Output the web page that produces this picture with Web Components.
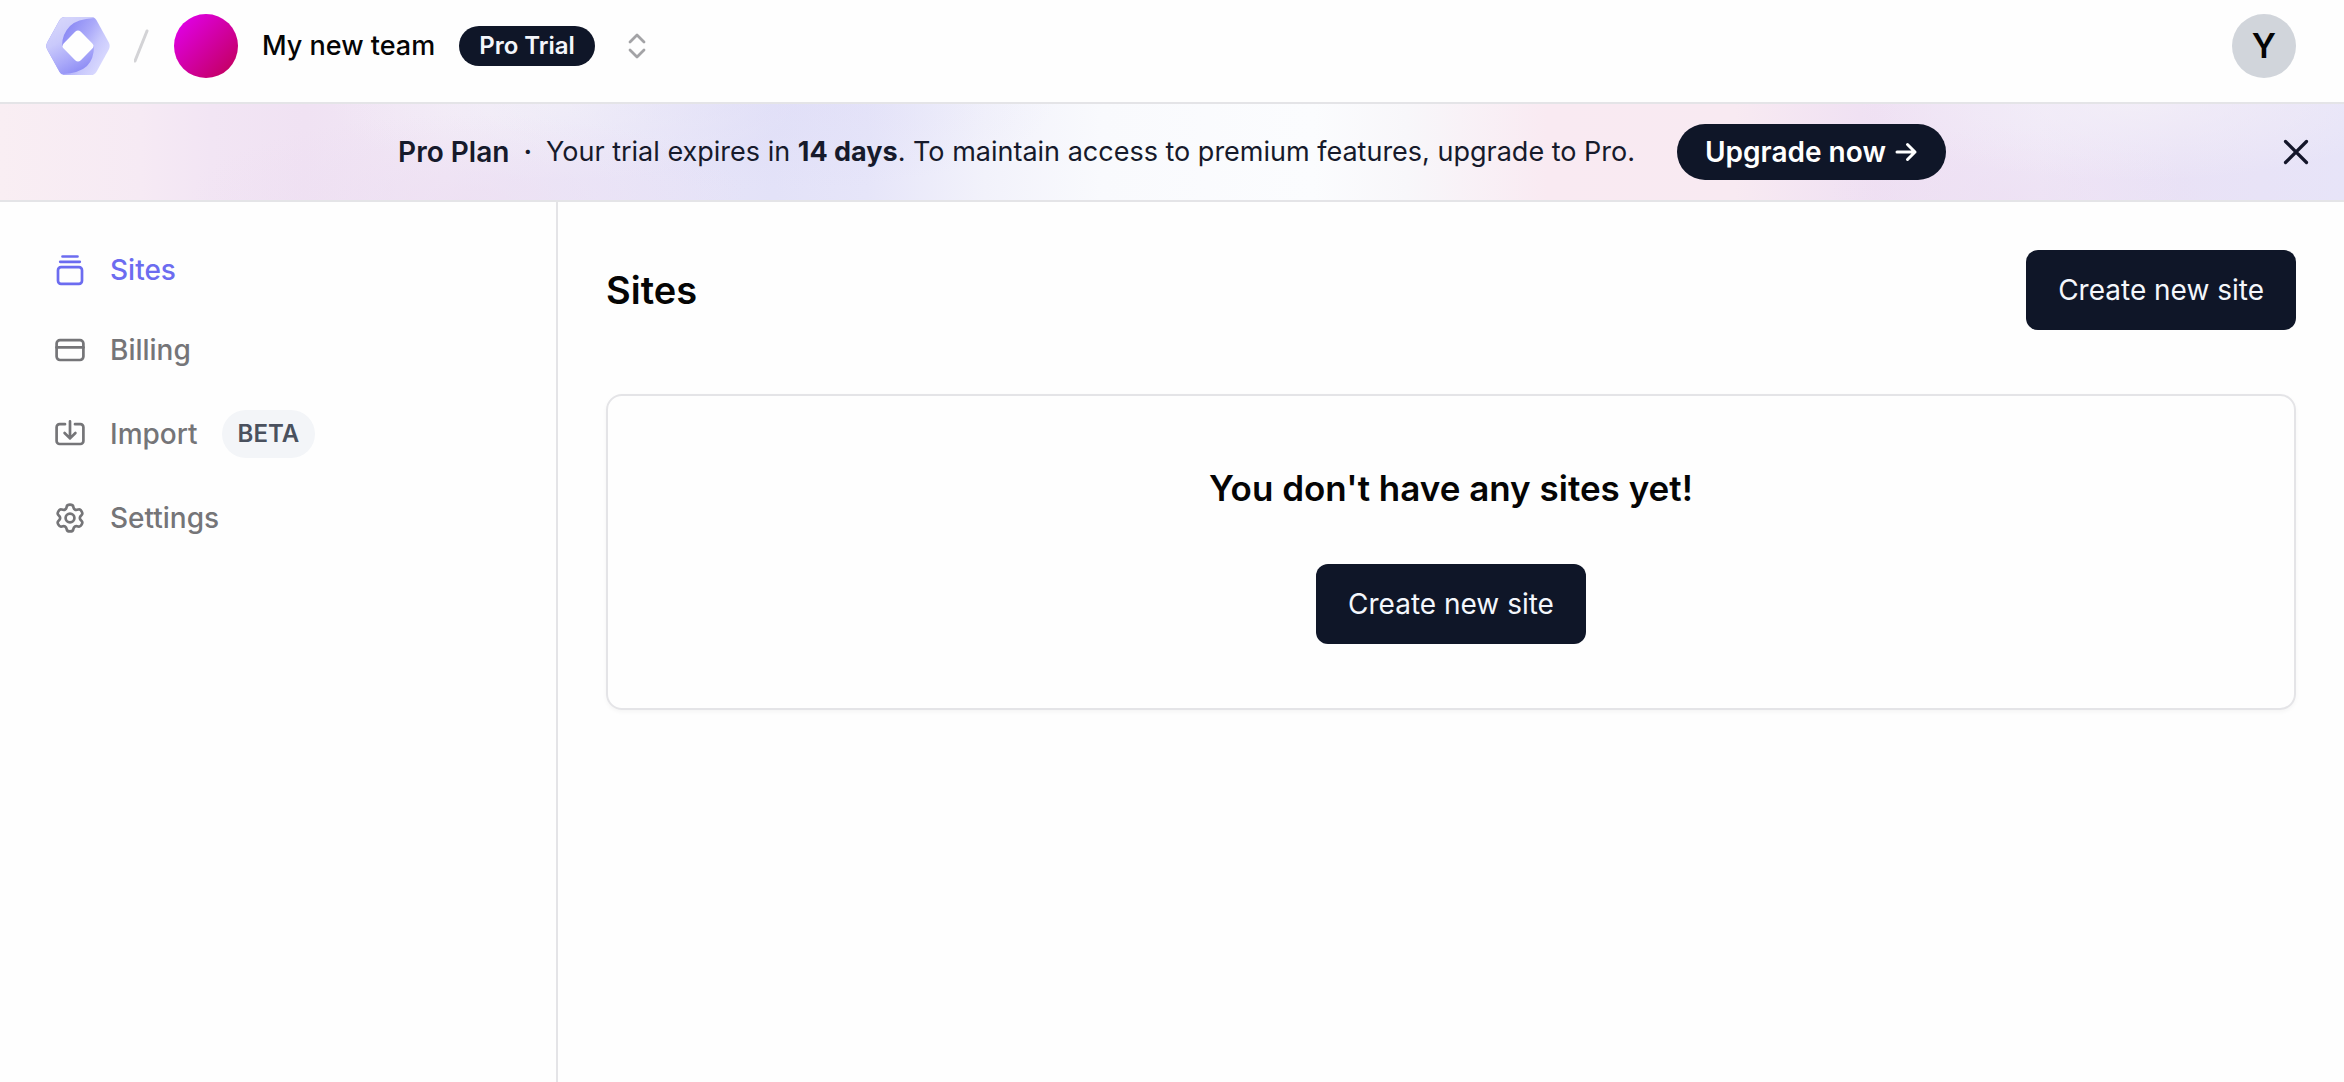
<!DOCTYPE html>
<html lang="en">
<head>
<meta charset="utf-8">
<meta name="viewport" content="width=device-width, initial-scale=1">
<title>Sites</title>
<style>
  :root {
    --ink: #0f1628;
    --line: #e4e4e7;
    --muted: #757578;
    --accent: #6c6cf0;
  }
  html, body { height: 100%; }
  body {
    margin: 0;
    background: #fefefe;
    color: #050505;
    font-family: Inter, "Liberation Sans", sans-serif;
    font-size: 28px;
    line-height: 40px;
  }
</style>
</head>
<body>
<app-shell>
  <app-header slot="header"></app-header>
  <trial-banner slot="banner">
    <strong slot="plan">Pro Plan</strong>
    <span slot="message">Your trial expires in <strong>14 days</strong>. To maintain access to premium features, upgrade to Pro.</span>
  </trial-banner>
  <side-nav slot="nav">
    <nav-item icon="sites" active>Sites</nav-item>
    <nav-item icon="billing">Billing</nav-item>
    <nav-item icon="import" badge="BETA">Import</nav-item>
    <nav-item icon="settings">Settings</nav-item>
  </side-nav>
  <sites-page>
    <empty-card heading="You don't have any sites yet!">
      <primary-button>Create new site</primary-button>
    </empty-card>
  </sites-page>
</app-shell>

<script>
const define = (name, markup) => customElements.define(name, class extends HTMLElement {
  constructor() {
    super();
    this.attachShadow({ mode: "open" }).innerHTML = markup;
  }
});

const reset = `
  * { box-sizing: border-box; }
  button { font: inherit; color: inherit; background: none; border: 0; margin: 0; padding: 0; cursor: pointer; }
  a { color: inherit; text-decoration: none; }
  svg { display: block; flex: none; }
`;

// Outline of a six-toothed gear, one set of curves per tooth.
const gearPath = () => {
  const at = (x, y, turn) => {
    const a = turn * Math.PI / 3, c = Math.cos(a), s = Math.sin(a);
    return `${(x * c - y * s).toFixed(2)} ${(x * s + y * c).toFixed(2)}`;
  };
  let d = `M${at(-4.9, -8.5, 0)}`;
  for (let i = 0; i < 6; i++) {
    d += `C${at(-3.6, -9.2, i)} ${at(-3.5, -10.2, i)} ${at(-3.2, -11.6, i)}`;
    d += `C${at(-2.7, -14, i)} ${at(2.7, -14, i)} ${at(3.2, -11.6, i)}`;
    d += `C${at(3.5, -10.2, i)} ${at(3.6, -9.2, i)} ${at(4.9, -8.5, i)}`;
  }
  return d + "Z";
};

const icons = {
  sites: `<path d="M-7.5-13.5h15M-9.8-8.2H9.8"/><rect x="-12" y="-2.8" width="24" height="16.6" rx="3"/>`,
  billing: `<rect x="-13.4" y="-9.8" width="26.8" height="19.8" rx="3.4"/><path d="M-13.4-2.6h26.8"/>`,
  import: `<path d="M-5-9.8h-5.4a3 3 0 0 0-3 3V7a3 3 0 0 0 3 3h20.8a3 3 0 0 0 3-3V-6.8a3 3 0 0 0-3-3H5M0-12.6V4.4M-5.4-1 0 4.4 5.4-1"/>`,
  settings: `<path d="${gearPath()}"/><circle r="4.4"/>`
};

define("app-shell", `
  <style>${reset}
    :host { display: flex; flex-direction: column; min-height: 100vh; }
    .body { display: flex; flex: 1; }
    main { flex: 1; min-width: 0; padding: 48px; }
  </style>
  <slot name="header"></slot>
  <slot name="banner"></slot>
  <div class="body">
    <slot name="nav"></slot>
    <main><slot></slot></main>
  </div>
`);

define("brand-logo", `
  <style>${reset} :host { display: block; }</style>
  <svg width="64" height="60" viewBox="0 0 64 60" role="img" aria-label="Home">
    <defs>
      <linearGradient id="outer" gradientUnits="userSpaceOnUse" x1="14" y1="2" x2="42" y2="54">
        <stop offset="0" stop-color="#d6d6fb"/><stop offset=".35" stop-color="#c9c9fb"/>
        <stop offset=".7" stop-color="#a9a8f9"/><stop offset="1" stop-color="#8a89f4"/>
      </linearGradient>
      <linearGradient id="inner" gradientUnits="userSpaceOnUse" x1="18" y1="20" x2="58" y2="44">
        <stop offset="0" stop-color="#8e8df5"/><stop offset=".4" stop-color="#aaa9f9"/>
        <stop offset=".7" stop-color="#c8c8fc"/><stop offset="1" stop-color="#d8d8fe"/>
      </linearGradient>
      <clipPath id="hex"><path d="M19 1h26q3.600 0 5.400 3.100L62.800 26.500q1.800 3.500 0 7L50.400 55.900Q48.600 59 45 59H19q-3.600 0-5.400-3.100L1.200 33.500q-1.800-3.500 0-7L13.600 4.100Q15.400 1 19 1Z"/></clipPath>
    </defs>
    <g clip-path="url(#hex)">
      <path fill="url(#inner)" d="M0 0h64v60H0z"/>
      <path fill="url(#outer)" d="M0 0h48v2Q31 3 24 10q-8 8-8 20h32q0 13-7 20-7 7-25 8v2H0z"/>
    </g>
    <rect x="-12" y="-12" width="24" height="24" rx="4" transform="translate(32 30) rotate(45)" fill="#fefefe"/>
  </svg>
`);

define("app-header", `
  <style>${reset}
    :host { display: block; border-bottom: 2px solid var(--line); }
    header { display: flex; align-items: center; justify-content: space-between; padding: 14px 48px 24px 46px; }
    .crumbs { display: flex; align-items: center; gap: 24px; }
    .team { display: flex; align-items: center; gap: 24px; font-size: 27px; font-weight: 500; }
    .avatar { width: 64px; height: 64px; border-radius: 50%; background: linear-gradient(135deg, #e000e8 8%, #c30060 92%); }
    .tag { padding: 0 20px; border-radius: 20px; background: var(--ink); color: #f4f6fb; font-size: 24px; font-weight: 600; }
    .user { width: 64px; height: 64px; border-radius: 50%; background: #d1d5db; font-size: 34px; font-weight: 600; }
  </style>
  <header>
    <div class="crumbs">
      <a href="#" aria-label="Home"><brand-logo></brand-logo></a>
      <svg width="16" height="34" viewBox="0 0 16 34" fill="none" stroke="#d3d3d6" stroke-width="3" stroke-linecap="round"><path d="M1 32 13 2"/></svg>
      <button class="team" type="button">
        <span class="avatar"></span>
        <span>My new team</span>
        <span class="tag">Pro Trial</span>
        <svg width="36" height="32" viewBox="0 0 36 32" fill="none" stroke="#a3a3a6" stroke-width="2.800" stroke-linecap="round" stroke-linejoin="round"><path d="m11 12 7-7 7 7M11 20l7 7 7-7"/></svg>
      </button>
    </div>
    <button class="user" type="button" aria-label="Account">Y</button>
  </header>
`);

define("trial-banner", `
  <style>${reset}
    :host {
      display: block;
      border-bottom: 2px solid var(--line);
      color: #161a2b;
      font-size: 27px;
      background:
        radial-gradient(ellipse 12% 90% at 20% 100%, #ecdcf190, #ecdcf100),
        radial-gradient(ellipse 12% 90% at 33% 0%, #dedcf770, #dedcf700),
        radial-gradient(ellipse 10% 80% at 24% 0%, #f5f2f8b0, #f5f2f800),
        radial-gradient(ellipse 12% 80% at 91% 0%, #f4f0f8c0, #f4f0f800),
        radial-gradient(ellipse 8% 80% at 86% 100%, #ecdcf170, #ecdcf100),
        linear-gradient(90deg, #f9eef3 0%, #f6eaf4 6%, #f2e5f4 9%, #f0e2f3 13%, #f1e8f6 19%,
          #ebe7f8 24%, #e3e2f8 33%, #e6e5f9 37%, #f2f2fb 42%, #f9fafd 47%, #fbfcfe 56%, #f8f7fa 60%,
          #f9eaf2 66%, #f8eaf2 74%, #efe0f3 80%, #efe7f7 87%, #e9e2f6 93%, #e7e4f8 100%);
    }
    section { display: grid; grid-template-columns: 1fr auto 1fr; align-items: center; padding: 20px 32px; }
    .offer { grid-column: 2; display: flex; align-items: center; gap: 42px; }
    p { margin: 0; display: flex; gap: 14px; }
    .dot { font-weight: 600; }
    ::slotted(strong) { font-weight: 600; font-size: 28px; }
    .upgrade { display: flex; align-items: center; gap: 8px; padding: 8px 28px; border-radius: 28px;
      background: var(--ink); color: #fff; font-size: 28px; font-weight: 600; }
    .close { justify-self: end; }
  </style>
  <section aria-label="Trial">
    <div class="offer">
      <p><slot name="plan"></slot><span class="dot">·</span><slot name="message"></slot></p>
      <a class="upgrade" href="#">Upgrade now
        <svg width="24" height="24" viewBox="0 0 24 24" fill="none" stroke="currentColor" stroke-width="3" stroke-linecap="round" stroke-linejoin="round"><path d="M3 12h18M13.500 4.500 21 12l-7.500 7.500"/></svg>
      </a>
    </div>
    <button class="close" type="button" aria-label="Dismiss">
      <svg width="32" height="32" viewBox="0 0 32 32" fill="none" stroke="#14162a" stroke-width="3.200" stroke-linecap="round"><path d="m5.500 5.500 21 21M26.500 5.500l-21 21"/></svg>
    </button>
  </section>
`);

define("side-nav", `
  <style>${reset}
    :host { display: block; flex: 0 0 558px; box-sizing: border-box; border-right: 2px solid var(--line); }
    nav { display: flex; flex-direction: column; align-items: flex-start; gap: 40px; padding: 48px 54px; }
  </style>
  <nav><slot></slot></nav>
`);

customElements.define("nav-item", class extends HTMLElement {
  constructor() {
    super();
    this.attachShadow({ mode: "open" });
  }
  connectedCallback() {
    const badge = this.getAttribute("badge");
    const current = this.hasAttribute("active") ? ' aria-current="page"' : "";
    this.shadowRoot.innerHTML = `
      <style>${reset}
        :host { display: block; color: var(--muted); font-weight: 500; }
        :host([active]) { color: var(--accent); }
        a { display: flex; align-items: center; gap: 24px; }
        .badge { padding: 4px 16px; border-radius: 24px; background: #f3f5f8; color: #4a515e; font-size: 24px; font-weight: 600; }
      </style>
      <a href="#"${current}>
        <svg width="32" height="32" viewBox="-16 -16 32 32" fill="none" stroke="currentColor" stroke-width="2.700" stroke-linecap="round" stroke-linejoin="round">${icons[this.getAttribute("icon")]}</svg>
        <slot></slot>
        ${badge ? `<span class="badge">${badge}</span>` : ""}
      </a>`;
  }
});

define("primary-button", `
  <style>${reset}
    :host { display: block; }
    button { display: block; padding: 20px 32px; border-radius: 12px; background: var(--ink); color: #f4f7fc; }
  </style>
  <button type="button"><slot></slot></button>
`);

define("sites-page", `
  <style>${reset}
    :host { display: flex; flex-direction: column; gap: 64px; }
    .title { display: flex; align-items: center; justify-content: space-between; }
    h1 { margin: 0; font-size: 38px; line-height: 48px; font-weight: 600; }
  </style>
  <div class="title">
    <h1>Sites</h1>
    <primary-button>Create new site</primary-button>
  </div>
  <slot></slot>
`);

customElements.define("empty-card", class extends HTMLElement {
  constructor() {
    super();
    this.attachShadow({ mode: "open" });
  }
  connectedCallback() {
    this.shadowRoot.innerHTML = `
      <style>${reset}
        :host { display: flex; flex-direction: column; align-items: center; gap: 52px; padding: 68px 48px 64px;
          border: 2px solid var(--line); border-radius: 16px; box-shadow: 0 2px 4px #0000000a; }
        h2 { margin: 0; font-size: 35px; line-height: 48px; font-weight: 600; }
      </style>
      <h2></h2>
      <slot></slot>`;
    this.shadowRoot.querySelector("h2").textContent = this.getAttribute("heading");
  }
});
</script>
</body>
</html>
